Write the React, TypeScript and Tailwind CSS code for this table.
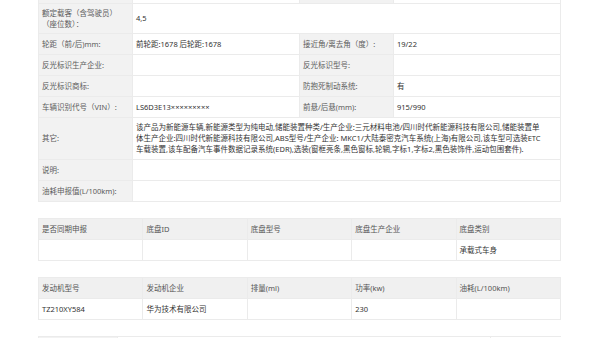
import React from 'react';

const LABEL = 'bg-[#f2f2f2] text-[#5c5c5c] pl-[3px] flex items-center';
const VALUE = 'bg-white text-[#333] pl-[3px] flex items-center';

type Row = { h: string; cells: { text?: React.ReactNode; label?: boolean; span?: boolean }[] };

const specRows: Row[] = [
  { h: 'h-[3px]', cells: [{ label: true }, {}, { label: true }, {}] },
  {
    h: 'h-[29px]',
    cells: [
      { label: true, text: <span>额定载客（含驾驶员）<br />（座位数）：</span> },
      { text: '4,5', span: true },
    ],
  },
  {
    h: 'h-[20px]',
    cells: [
      { label: true, text: '轮距（前/后)mm:' },
      { text: '前轮距:1678 后轮距:1678' },
      { label: true, text: '接近角/离去角（度）:' },
      { text: '19/22' },
    ],
  },
  {
    h: 'h-[20px]',
    cells: [{ label: true, text: '反光标识生产企业:' }, {}, { label: true, text: '反光标识型号:' }, {}],
  },
  {
    h: 'h-[20px]',
    cells: [{ label: true, text: '反光标识商标:' }, {}, { label: true, text: '防抱死制动系统:' }, { text: '有' }],
  },
  {
    h: 'h-[20px]',
    cells: [
      { label: true, text: '车辆识别代号（VIN）:' },
      { text: 'LS6D3E13×××××××××' },
      { label: true, text: '前悬/后悬(mm):' },
      { text: '915/990' },
    ],
  },
  {
    h: 'h-[41px]',
    cells: [
      { label: true, text: '其它:' },
      {
        span: true,
        text: (
          <span className="leading-[11px] whitespace-nowrap">
            该产品为新能源车辆,新能源类型为纯电动,储能装置种类/生产企业:三元材料电池/四川时代新能源科技有限公司,储能装置单
            <br />
            体生产企业:四川时代新能源科技有限公司,ABS型号/生产企业: MKC1/大陆泰密克汽车系统(上海)有限公司,该车型可选装ETC
            <br />
            车载装置,该车配备汽车事件数据记录系统(EDR),选装(窗框亮条,黑色窗标,轮辋,字标1,字标2,黑色装饰件,运动包围套件).
          </span>
        ),
      },
    ],
  },
  { h: 'h-[20px]', cells: [{ label: true, text: '说明:' }, { span: true }] },
  { h: 'h-[20px]', cells: [{ label: true, text: '油耗申报值(L/100km):' }, { span: true }] },
];

function SmallTable({ head, data }: { head: string[]; data: string[] }) {
  return (
    <div className="mt-4 w-[523px] grid grid-cols-5 gap-px p-px bg-[#ebebeb]">
      {head.map((t, i) => (
        <div key={'h' + i} className="h-[20px] bg-[#f0f0f0] text-[#555] pl-[3px] flex items-center">
          {t}
        </div>
      ))}
      {data.map((t, i) => (
        <div key={'d' + i} className="h-[20px] bg-white text-[#333] pl-[3px] flex items-center">
          {t}
        </div>
      ))}
    </div>
  );
}

export default function App() {
  return (
    <div className="w-[600px] h-[338px] overflow-hidden bg-white pl-[38px] text-[7.5px] leading-[11px] font-['Noto_Sans','Noto_Sans_CJK_SC',sans-serif]">
      <div className="w-[523px] grid grid-cols-[93px_166px_93px_166px] gap-px px-px pb-px bg-[#ebebeb]">
        {specRows.map((row, ri) =>
          row.cells.map((c, ci) => (
            <div
              key={ri + '-' + ci}
              className={`${row.h} ${c.label ? LABEL : VALUE} ${c.span ? 'col-span-3' : ''}`}
            >
              {c.text}
            </div>
          ))
        )}
      </div>

      <SmallTable
        head={['是否同期申报', '底盘ID', '底盘型号', '底盘生产企业', '底盘类别']}
        data={['', '', '', '', '承载式车身']}
      />

      <SmallTable
        head={['发动机型号', '发动机企业', '排量(ml)', '功率(kw)', '油耗(L/100km)']}
        data={['TZ210XY584', '华为技术有限公司', '', '230', '']}
      />

      <div className="mt-4 w-[523px] grid grid-cols-[78px_372px_70px] gap-px pt-px px-px bg-[#ebebeb]">
        <div className="h-[8px] bg-[#f2f2f2]" />
        <div className="h-[8px] bg-white" />
        <div className="h-[8px] bg-white" />
      </div>
    </div>
  );
}
